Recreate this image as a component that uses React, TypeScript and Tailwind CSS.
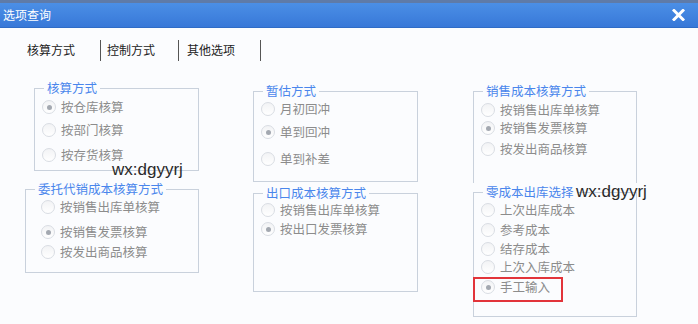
import React from "react";

const cjk = { fontFamily: '"Noto Sans CJK SC", "Noto Sans", sans-serif' };

function Radio({ checked }: { checked?: boolean }) {
  return (
    <span className="w-[14px] h-[14px] rounded-full border border-[#d9dde3] bg-gradient-to-b from-[#f2f3f5] to-[#ffffff] flex items-center justify-center shrink-0">
      {checked ? <span className="w-[5px] h-[5px] rounded-full bg-[#a3a8b0]" /> : null}
    </span>
  );
}

function Option({ label, checked, className }: { label: string; checked?: boolean; className: string }) {
  return (
    <div className={"flex items-center h-[20px] gap-[5px] " + className}>
      <Radio checked={checked} />
      <span className="text-[12.5px] leading-[20px] text-[#8c8c8c] whitespace-nowrap">{label}</span>
    </div>
  );
}

function Group({
  legend,
  className,
  children,
}: {
  legend: string;
  className: string;
  children: React.ReactNode;
}) {
  return (
    <div className={"relative border-[#c9d1dc] " + className}>
      <span className="absolute top-[-9px] left-[9px] px-[3px] bg-[#fbfcfe] text-[12.5px] leading-[16px] text-[#4a86ec] whitespace-nowrap">
        {legend}
      </span>
      <div className="flex flex-col">{children}</div>
    </div>
  );
}

export default function App() {
  return (
    <div className="w-[698px] h-[324px] overflow-hidden bg-[#fbfcfe] relative" style={cjk}>
      {/* title bar */}
      <div className="h-[3px] bg-[#5f7ba8]" />
      <div className="h-[24px] bg-gradient-to-b from-[#4b8fe6] to-[#3878d8] flex items-center justify-between pl-[3px] pr-[13px]">
        <span className="text-[12px] leading-[16px] text-white">选项查询</span>
        <svg width="13" height="12" viewBox="0 0 13 12">
          <path d="M2 1.5 L11 10.5 M11 1.5 L2 10.5" stroke="#ffffff" strokeWidth="3" strokeLinecap="square" />
        </svg>
      </div>
      <div className="h-[1px] bg-[#2f6cc6]" />

      {/* tabs */}
      <div className="flex items-center h-[22px] mt-[11px] pl-[27px] text-[12px] text-[#222222]">
        <span className="leading-[22px]">核算方式</span>
        <span className="w-[1px] h-[21px] bg-[#555555] ml-[25px]" />
        <span className="leading-[22px] ml-[6px]">控制方式</span>
        <span className="w-[1px] h-[21px] bg-[#555555] ml-[23px]" />
        <span className="leading-[22px] ml-[8px]">其他选项</span>
        <span className="w-[1px] h-[21px] bg-[#555555] ml-[25px]" />
      </div>

      {/* columns */}
      <div className="flex items-start">
        {/* column 1 */}
        <div className="flex flex-col items-end w-[199px]">
          <Group legend="核算方式" className="w-[165px] h-[83px] border mt-[27px] pl-[7px]">
            <Option label="按仓库核算" checked className="mt-[8px]" />
            <Option label="按部门核算" className="mt-[3px]" />
            <Option label="按存货核算" className="mt-[5px]" />
          </Group>
          <Group legend="委托代销成本核算方式" className="w-[174px] h-[84px] border mt-[18px] pl-[15px]">
            <Option label="按销售出库单核算" className="mt-[7px]" />
            <Option label="按销售发票核算" checked className="mt-[5px]" />
            <Option label="按发出商品核算" className="mt-[0px]" />
          </Group>
        </div>

        {/* column 2 */}
        <div className="flex flex-col ml-[54px]">
          <Group legend="暂估方式" className="w-[165px] h-[91px] border mt-[30px] pl-[7px]">
            <Option label="月初回冲" className="mt-[7px]" />
            <Option label="单到回冲" checked className="mt-[3px]" />
            <Option label="单到补差" className="mt-[7px]" />
          </Group>
          <Group legend="出口成本核算方式" className="w-[165px] h-[99px] border mt-[11px] pl-[7px]">
            <Option label="按销售出库单核算" className="mt-[6px]" />
            <Option label="按出口发票核算" checked className="mt-[-1px]" />
          </Group>
        </div>

        {/* column 3 */}
        <div className="flex flex-col ml-[55px]">
          <Group legend="销售成本核算方式" className="w-[164px] h-[92px] border border-b-0 mt-[30px] pl-[7px]">
            <Option label="按销售出库单核算" className="mt-[8px]" />
            <Option label="按销售发票核算" checked className="mt-[-2px]" />
            <Option label="按发出商品核算" className="mt-[1px]" />
          </Group>
          <Group legend="零成本出库选择" className="w-[164px] h-[125px] border mt-[9px] pl-[7px]">
            <Option label="上次出库成本" className="mt-[7px]" />
            <Option label="参考成本" className="mt-[0px]" />
            <Option label="结存成本" className="mt-[-1px]" />
            <Option label="上次入库成本" className="mt-[-2px]" />
            <Option label="手工输入" checked className="mt-[0px]" />
            <div className="absolute left-[-1px] top-[84px] w-[90px] h-[25px] border-2 border-[#e2343a]" />
            <span
              className="absolute left-[102px] top-[-12px] text-[17px] leading-[22px] text-[#2a2a2a] whitespace-nowrap"
              style={{ fontFamily: '"Liberation Sans", Arial, sans-serif' }}
            >
              wx:dgyyrj
            </span>
          </Group>
        </div>
      </div>

      {/* watermark 1 */}
      <span
        className="absolute left-[112px] top-[159px] text-[17px] leading-[22px] text-[#2a2a2a] whitespace-nowrap"
        style={{ fontFamily: '"Liberation Sans", Arial, sans-serif' }}
      >
        wx:dgyyrj
      </span>
    </div>
  );
}
